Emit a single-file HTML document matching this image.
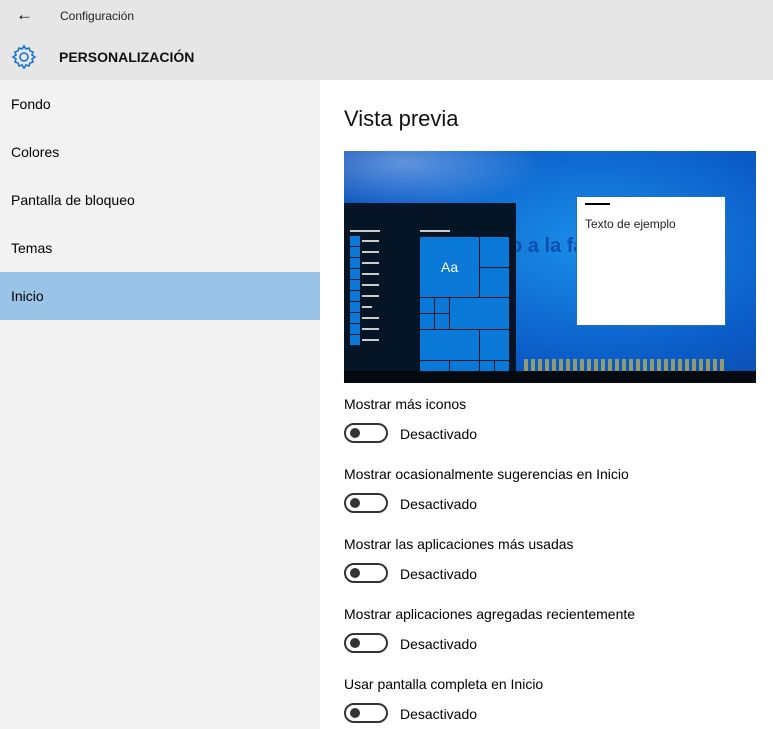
<!DOCTYPE html><html><head><style>
body{margin:0;width:773px;height:729px;overflow:hidden;font-family:"Liberation Sans",sans-serif;background:#fff;position:relative}
.a{position:absolute}
.nav{position:absolute;left:11px;font-size:14px;color:#000}
.lbl{position:absolute;left:344px;font-size:14px;color:#000}
.tg{position:absolute;left:344px;width:40px;height:16px;border:2px solid #333;border-radius:10px}
.tg:after{content:"";position:absolute;left:4px;top:3px;width:10px;height:10px;border-radius:50%;background:#333}
.tt{position:absolute;left:400px;font-size:14px;color:#000}
.t{position:absolute;background:#0a78d7;outline:1px solid #061525}
</style></head><body>
<div class="a" style="left:0;top:0;width:773px;height:80px;background:#e6e6e6"></div>
<div class="a" style="left:16px;top:5px;font-size:17px">&#8592;</div>
<div class="a" style="left:60px;top:9px;font-size:12px;color:#222">Configuración</div>
<svg class="a" style="left:11px;top:44px" width="26" height="26" viewBox="0 0 26 26"><path d="M13 2l2 3 3-1 1 3 3 1-1 3 3 2-3 2 1 3-3 1-1 3-3-1-2 3-2-3-3 1-1-3-3-1 1-3-3-2 3-2-1-3 3-1 1-3 3 1z" fill="none" stroke="#1a73d0" stroke-width="1.6"/><circle cx="13" cy="13" r="4" fill="none" stroke="#1a73d0" stroke-width="1.6"/></svg>
<div class="a" style="left:59px;top:49px;font-size:14px;font-weight:bold;color:#111">PERSONALIZACIÓN</div>
<div class="a" style="left:0;top:80px;width:320px;height:649px;background:#f2f2f2"></div>
<div class="a" style="left:0;top:272px;width:320px;height:48px;background:#99c4e8"></div>
<div class="nav" style="top:96px">Fondo</div>
<div class="nav" style="top:144px">Colores</div>
<div class="nav" style="top:192px">Pantalla de bloqueo</div>
<div class="nav" style="top:240px">Temas</div>
<div class="nav" style="top:288px">Inicio</div>
<div class="a" style="left:344px;top:106px;font-size:22px;color:#111">Vista previa</div>
<div class="a" style="left:344px;top:151px;width:412px;height:232px;background:radial-gradient(ellipse at 60% 40%,#1a8ee8,#0b5cc7 60%,#0a47a8);overflow:hidden">
<div class="a" style="left:0;top:0;width:200px;height:60px;background:radial-gradient(ellipse at 30% 20%,rgba(200,220,255,.45),rgba(255,255,255,0) 70%)"></div>
<div class="a" style="left:166px;top:84px;font-size:20px;font-weight:bold;color:#0a4fb0">o a la fam</div>
<div class="a" style="left:180px;top:208px;width:200px;height:12px;background:repeating-linear-gradient(90deg,#c9b84a 0 4px,transparent 4px 7px);opacity:.7"></div>
<div class="a" style="left:0;top:52px;width:172px;height:168px;background:#061525"></div>
<div class="a" style="left:0;top:220px;width:412px;height:12px;background:#050a10"></div>
<div class="a" style="left:233px;top:46px;width:148px;height:128px;background:#fff;outline:1px solid #1a6fd0"></div>
<div class="a" style="left:241px;top:52px;width:25px;height:2px;background:#000"></div>
<div class="a" style="left:241px;top:66px;font-size:12px;color:#222">Texto de ejemplo</div>
<div class="a" style="left:6px;top:79px;width:30px;height:2px;background:#ccc"></div>
<div class="a" style="left:76px;top:79px;width:30px;height:2px;background:#ccc"></div>
</div>
<div id="ic"></div>
<script>
var h='';for(var i=0;i<10;i++){var y=236+i*11;h+='<div class="a" style="left:350px;top:'+y+'px;width:10px;height:10px;background:#0a78d7"></div><div class="a" style="left:362px;top:'+(y+4)+'px;width:'+(i==6?10:17)+'px;height:2px;background:#ccc"></div>'}
var T=[[420,237,59,60],[480,237,29,30],[480,268,29,29],[420,298,14,15],[435,298,14,15],[420,314,14,15],[435,314,14,15],[450,298,59,31],[420,330,59,30],[480,330,29,30],[420,361,29,10],[450,361,29,10],[480,361,14,10],[495,361,14,10]];
T.forEach(function(t){h+='<div class="t" style="left:'+t[0]+'px;top:'+t[1]+'px;width:'+t[2]+'px;height:'+t[3]+'px"></div>'});
h+='<div class="a" style="left:441px;top:259px;font-size:14px;color:#fff">Aa</div>';
document.getElementById('ic').innerHTML=h;
</script>
<div class="lbl" style="top:396px">Mostrar más iconos</div>
<div class="tg" style="top:423px"></div><div class="tt" style="top:426px">Desactivado</div>
<div class="lbl" style="top:466px">Mostrar ocasionalmente sugerencias en Inicio</div>
<div class="tg" style="top:493px"></div><div class="tt" style="top:496px">Desactivado</div>
<div class="lbl" style="top:536px">Mostrar las aplicaciones más usadas</div>
<div class="tg" style="top:563px"></div><div class="tt" style="top:566px">Desactivado</div>
<div class="lbl" style="top:606px">Mostrar aplicaciones agregadas recientemente</div>
<div class="tg" style="top:633px"></div><div class="tt" style="top:636px">Desactivado</div>
<div class="lbl" style="top:676px">Usar pantalla completa en Inicio</div>
<div class="tg" style="top:703px"></div><div class="tt" style="top:706px">Desactivado</div>
</body></html>
